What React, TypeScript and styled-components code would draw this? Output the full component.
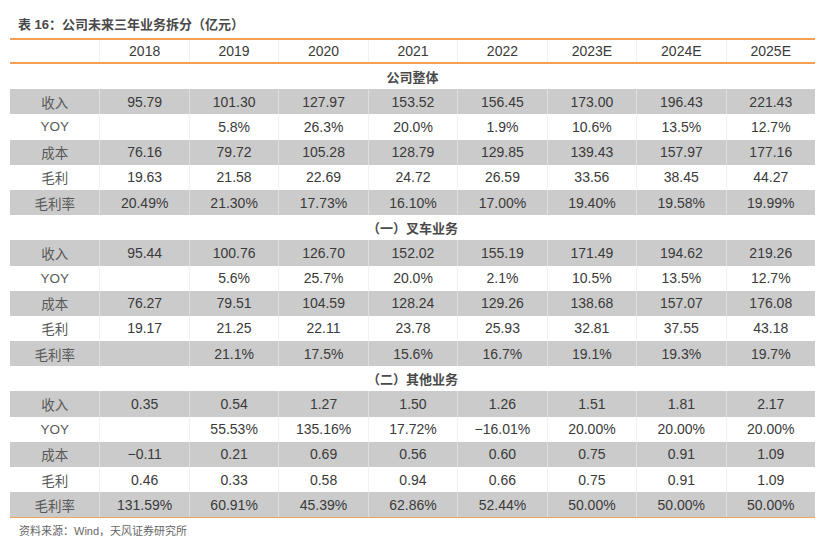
import styled, { createGlobalStyle } from "styled-components";

const years = ["2018", "2019", "2020", "2021", "2022", "2023E", "2024E", "2025E"];

const labels = ["收入", "YOY", "成本", "毛利", "毛利率"];

const sections: { title: string; rows: string[][] }[] = [
    {
        title: "公司整体",
        rows: [
            ["95.79", "101.30", "127.97", "153.52", "156.45", "173.00", "196.43", "221.43"],
            ["", "5.8%", "26.3%", "20.0%", "1.9%", "10.6%", "13.5%", "12.7%"],
            ["76.16", "79.72", "105.28", "128.79", "129.85", "139.43", "157.97", "177.16"],
            ["19.63", "21.58", "22.69", "24.72", "26.59", "33.56", "38.45", "44.27"],
            ["20.49%", "21.30%", "17.73%", "16.10%", "17.00%", "19.40%", "19.58%", "19.99%"],
        ],
    },
    {
        title: "（一）叉车业务",
        rows: [
            ["95.44", "100.76", "126.70", "152.02", "155.19", "171.49", "194.62", "219.26"],
            ["", "5.6%", "25.7%", "20.0%", "2.1%", "10.5%", "13.5%", "12.7%"],
            ["76.27", "79.51", "104.59", "128.24", "129.26", "138.68", "157.07", "176.08"],
            ["19.17", "21.25", "22.11", "23.78", "25.93", "32.81", "37.55", "43.18"],
            ["", "21.1%", "17.5%", "15.6%", "16.7%", "19.1%", "19.3%", "19.7%"],
        ],
    },
    {
        title: "（二）其他业务",
        rows: [
            ["0.35", "0.54", "1.27", "1.50", "1.26", "1.51", "1.81", "2.17"],
            ["", "55.53%", "135.16%", "17.72%", "−16.01%", "20.00%", "20.00%", "20.00%"],
            ["−0.11", "0.21", "0.69", "0.56", "0.60", "0.75", "0.91", "1.09"],
            ["0.46", "0.33", "0.58", "0.94", "0.66", "0.75", "0.91", "1.09"],
            ["131.59%", "60.91%", "45.39%", "62.86%", "52.44%", "50.00%", "50.00%", "50.00%"],
        ],
    },
];

function App() {
    return (
        <>
            <GlobalStyle />
            <Page>
                <Title>表 16：公司未来三年业务拆分（亿元）</Title>
                <Table>
                    <HeadRow>
                        <Cell />
                        {years.map((y) => (
                            <Cell key={y}>{y}</Cell>
                        ))}
                    </HeadRow>
                    {sections.map((section) => (
                        <div key={section.title}>
                            <SectionRow>{section.title}</SectionRow>
                            {section.rows.map((values, i) => (
                                <Row key={labels[i]} $shaded={i % 2 === 0}>
                                    <Label>{labels[i]}</Label>
                                    {values.map((v, j) => (
                                        <Cell key={j}>{v}</Cell>
                                    ))}
                                </Row>
                            ))}
                        </div>
                    ))}
                </Table>
                <Source>资料来源：Wind，天风证券研究所</Source>
            </Page>
        </>
    );
}

export default App;

const GlobalStyle = createGlobalStyle`
    body {
        margin: 0;
        background: #ffffff;
        font-family: "Liberation Sans", "Noto Sans CJK SC", sans-serif;
    }
`;

const Page = styled.div`
    width: 832px;
    height: 554px;
    padding: 16px 17px 0 10px;
    box-sizing: border-box;
`;

const Title = styled.div`
    padding-left: 8px;
    height: 22px;
    font-size: 13px;
    font-weight: bold;
    line-height: 18px;
    color: #4a4a4a;
`;

const Table = styled.div`
    border-bottom: 1px solid #f5a25d;
`;

const Row = styled.div<{ $shaded?: boolean }>`
    display: grid;
    grid-template-columns: repeat(9, 1fr);
    height: 25.2px;
    background: ${(p) => (p.$shaded ? "#cbcbcb" : "#ffffff")};

    & > div + div {
        border-left: 1px solid ${(p) => (p.$shaded ? "#dedede" : "#f1f1f1")};
    }
`;

const HeadRow = styled(Row)`
    height: 22px;
    border-top: 2px solid #f7a055;
    border-bottom: 2px solid #f7a055;
`;

const Cell = styled.div`
    display: flex;
    align-items: center;
    justify-content: center;
    font-size: 14px;
    color: #3a3a3a;
`;

const Label = styled(Cell)`
    font-size: 13.5px;
    color: #595959;
`;

const SectionRow = styled.div`
    height: 25.2px;
    display: flex;
    align-items: center;
    justify-content: center;
    font-size: 13px;
    font-weight: bold;
    color: #4a4a4a;
`;

const Source = styled.div`
    padding: 4px 0 0 9px;
    font-size: 11px;
    color: #666666;
`;
